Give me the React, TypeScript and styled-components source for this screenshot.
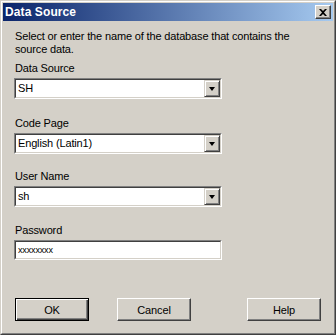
import React from "react";
import styled, { createGlobalStyle } from "styled-components";

const Global = createGlobalStyle`
  html, body { margin: 0; padding: 0; background: #d4d0c8; }
  * { box-sizing: border-box; }
`;

const Window = styled.div`
  width: 336px;
  height: 335px;
  background: #d4d0c8;
  border: 1px solid;
  border-color: #d4d0c8 #404040 #404040 #d4d0c8;
  font-family: "Liberation Sans", Arial, sans-serif;
  font-size: 11px;
  letter-spacing: -0.15px;
  color: #000;
`;

const Inner = styled.div`
  height: 100%;
  border: 1px solid;
  border-color: #ffffff #808080 #808080 #ffffff;
  padding: 1px;
  display: flex;
  flex-direction: column;
`;

const TitleBar = styled.div`
  height: 18px;
  background: linear-gradient(to right, #0a246a, #a6caf0);
  display: flex;
  align-items: center;
  justify-content: space-between;
  padding: 0 2px 0 2px;
`;

const Title = styled.span`
  color: #fff;
  font-weight: bold;
  font-size: 12px;
  font-family: "Liberation Sans", Arial, sans-serif;
  letter-spacing: 0.1px;
`;

const CloseBtn = styled.div`
  width: 16px;
  height: 14px;
  background: #d4d0c8;
  border: 1px solid;
  border-color: #ffffff #404040 #404040 #ffffff;
  box-shadow: inset -1px -1px 0 #808080;
  display: flex;
  align-items: center;
  justify-content: center;
`;

const Content = styled.div`
  flex: 1;
  display: flex;
  flex-direction: column;
  padding: 9px 12px 0 11px;
`;

const Description = styled.p`
  margin: 0 0 6px 1px;
  line-height: 13px;
`;

const Field = styled.div<{ $mb?: number }>`
  display: flex;
  flex-direction: column;
  margin-bottom: ${(p) => p.$mb ?? 17}px;
`;

const Label = styled.label<{ $gap?: number }>`
  line-height: 13px;
  margin: 0 0 ${(p) => p.$gap ?? 3}px 1px;
`;

const Sunken = styled.div<{ $h: number }>`
  width: 208px;
  height: ${(p) => p.$h}px;
  border: 1px solid;
  border-color: #808080 #ffffff #ffffff #808080;
  background: #fff;
`;

const SunkenInner = styled.div`
  height: 100%;
  border: 1px solid;
  border-color: #404040 #d4d0c8 #d4d0c8 #404040;
  display: flex;
  align-items: center;
  background: #fff;
`;

const Value = styled.span<{ $small?: boolean }>`
  flex: 1;
  padding-left: 2px;
  font-size: ${(p) => (p.$small ? "9px" : "11px")};
  line-height: 13px;
`;

const DropBtn = styled.div`
  width: 16px;
  height: 17px;
  background: #d4d0c8;
  border: 1px solid;
  border-color: #d4d0c8 #404040 #404040 #d4d0c8;
  box-shadow: inset 1px 1px 0 #ffffff, inset -1px -1px 0 #808080;
  display: flex;
  align-items: center;
  justify-content: center;
`;

const Arrow = styled.div`
  width: 0;
  height: 0;
  border-left: 3.5px solid transparent;
  border-right: 3.5px solid transparent;
  border-top: 4px solid #000;
`;

const ButtonRow = styled.div`
  display: flex;
  margin-top: auto;
  margin-bottom: 11px;
  margin-left: 1px;
`;

const Button = styled.div<{ $default?: boolean; $ml?: number }>`
  width: 75px;
  height: 23px;
  margin-left: ${(p) => p.$ml ?? 0}px;
  background: #d4d0c8;
  border: 1px solid;
  border-color: ${(p) => (p.$default ? "#000" : "#ffffff #404040 #404040 #ffffff")};
  box-shadow: ${(p) =>
    p.$default
      ? "inset 1px 1px 0 #ffffff, inset -1px -1px 0 #404040, inset -2px -2px 0 #808080"
      : "inset -1px -1px 0 #808080"};
  display: flex;
  align-items: center;
  justify-content: center;
`;

function Combo({ value }: { value: string }) {
  return (
    <Sunken $h={21}>
      <SunkenInner>
        <Value>{value}</Value>
        <DropBtn>
          <Arrow />
        </DropBtn>
      </SunkenInner>
    </Sunken>
  );
}

export default function App() {
  return (
    <>
      <Global />
      <Window>
        <Inner>
          <TitleBar>
            <Title>Data Source</Title>
            <CloseBtn>
              <svg width="8" height="7" viewBox="0 0 8 7">
                <path d="M0 0h2l2 2 2-2h2L5 3.5 8 7H6L4 5 2 7H0l3-3.5z" fill="#000" />
              </svg>
            </CloseBtn>
          </TitleBar>
          <Content>
            <Description>
              Select or enter the name of the database that contains the source data.
            </Description>
            <Field $mb={18}>
              <Label>Data Source</Label>
              <Combo value="SH" />
            </Field>
            <Field $mb={16}>
              <Label>Code Page</Label>
              <Combo value="English (Latin1)" />
            </Field>
            <Field>
              <Label>User Name</Label>
              <Combo value="sh" />
            </Field>
            <Field>
              <Label>Password</Label>
              <Sunken $h={20}>
                <SunkenInner>
                  <Value $small>xxxxxxxx</Value>
                </SunkenInner>
              </Sunken>
            </Field>
            <ButtonRow>
              <Button $default>OK</Button>
              <Button $ml={28}>Cancel</Button>
              <Button $ml={56}>Help</Button>
            </ButtonRow>
          </Content>
        </Inner>
      </Window>
    </>
  );
}
